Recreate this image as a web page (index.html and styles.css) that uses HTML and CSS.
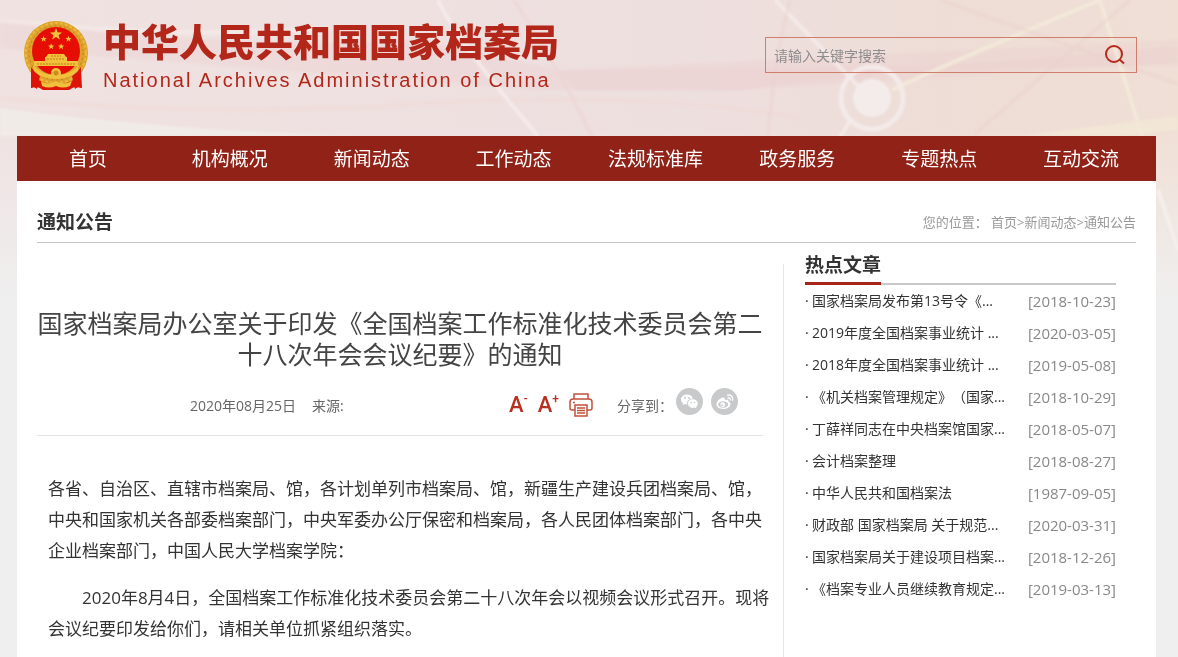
FILE: index.html
```
<!DOCTYPE html>
<html lang="zh-CN">
<head>
    <meta charset="UTF-8">
    <meta name="viewport" content="width=device-width, initial-scale=1.0">
    <title>通知公告 - 中华人民共和国国家档案局</title>
    <link rel="stylesheet" href="styles.css">
</head>
<body>
    <svg class="page-bg" viewBox="0 0 1178 320" preserveAspectRatio="none" aria-hidden="true">
        <g class="glow">
            <path d="M0 18 Q200 50 420 40 L560 70 L1178 40 V66 Q900 66 740 90 H540 Q300 72 0 48Z" fill="#ecd0cf" opacity=".4"/>
            <path d="M560 71 L900 66 Q1000 64 1178 46 V62 Q940 78 740 90 L575 90Z" fill="#ecd0cf" opacity=".4"/>
            <path d="M0 108 Q160 130 360 136 H0Z" fill="#f1ece8" opacity=".9"/>
            <path d="M0 98 Q200 118 420 104 T800 118" fill="none" stroke="#efd6d2" stroke-width="4" opacity=".4"/>
            <path d="M0 20 Q180 40 330 28" fill="none" stroke="#f5ecea" stroke-width="5" opacity=".6"/>
            <path d="M438 0 Q456 40 538 136" fill="none" stroke="#f6eeec" stroke-width="4" opacity=".8"/>
            <path d="M514 0 Q560 70 592 136" fill="none" stroke="#ecd2d0" stroke-width="3" opacity=".6"/>
            <path d="M775 0 L858 86 M852 118 L838 140" stroke="#f5edea" stroke-width="4" opacity=".8"/>
            <path d="M892 90 Q960 58 1100 0 M1100 0 L1142 136" fill="none" stroke="#f3ead9" stroke-width="4" opacity=".9"/>
            <path d="M940 0 L1178 84 M975 134 L1130 0 M790 0 Q774 60 768 136" fill="none" stroke="#ecd2cc" stroke-width="3" opacity=".5"/>
            <path d="M1158 190 L1178 250" stroke="#f4efed" stroke-width="4"/>
            <path d="M1020 136 L1178 116 V130 L1120 136Z" fill="#f2e8d6" opacity=".8"/>
            <circle cx="872" cy="98" r="31" fill="none" stroke="#f4eceb" stroke-width="5" opacity=".9"/>
            <circle cx="872" cy="98" r="19" fill="#f3ecea"/>
        </g>
    </svg>

    <div class="container">
        <header class="header">
            <div class="brand">
                <svg class="emblem" viewBox="0 0 66 72" aria-hidden="true">
                    <path d="M9 50 L8 69 Q14 66 20 71 L46 71 Q52 66 59 69 L58 50Z" fill="#dd1408"/>
                    <circle cx="33" cy="34" r="32" fill="#dda12c"/>
                    <circle cx="33" cy="34" r="30" fill="none" stroke="#e9bb3c" stroke-width="2" stroke-dasharray="3 2"/>
                    <circle cx="33" cy="34" r="27" fill="none" stroke="#c47e1e" stroke-width="1" stroke-dasharray="2 3"/>
                    <circle cx="33" cy="32" r="24" fill="#e60d05"/>
                    <path d="M8 48 Q12 54 17 57 L14 70 Q11 67 8 69Z M58 48 Q54 54 49 57 L52 70 Q55 67 58 69Z" fill="#dd1408"/>
                    <g fill="#f0c23c">
                        <path id="star" d="M33 9 L34.600 13.300 L39 13.400 L35.600 16.200 L36.800 20.500 L33 18 L29.200 20.500 L30.400 16.200 L27 13.400 L31.400 13.300Z"/>
                        <use href="#star" transform="translate(3.500 12) scale(.52)"/>
                        <use href="#star" transform="translate(28.300 12) scale(.52)"/>
                        <use href="#star" transform="translate(11 19.500) scale(.52)"/>
                        <use href="#star" transform="translate(21 19.500) scale(.52)"/>
                        <path d="M25 35 H41 L43 38 H23Z M22 38 H44 V42 H22Z M11 42 H55 V47 H11Z"/>
                        <path d="M10 46 Q18 56 33 56 Q48 56 56 46 L55 52 Q47 60 33 60 Q19 60 11 52Z"/>
                        <circle cx="33" cy="54" r="5"/>
                        <path d="M18 62 Q26 67 33 62 Q40 67 49 62 L47 67 Q40 70 33 67 Q26 70 19 67Z"/>
                    </g>
                    <path d="M28 37 H38 M24 40 H42 M14 45 H52" stroke="#c57a18" stroke-width="1" stroke-dasharray="2 1"/>
                    <circle cx="33" cy="54" r="2.500" fill="#c98a20"/>
                </svg>
                <div class="brand-text">
                    <div class="brand-cn">中华人民共和国国家档案局</div>
                    <div class="brand-en">National Archives Administration of China</div>
                </div>
            </div>
            <form class="search">
                <input type="text" placeholder="请输入关键字搜索" aria-label="请输入关键字搜索">
                <button type="button" aria-label="搜索">
                    <svg width="20" height="20" viewBox="0 0 20 20" fill="none" stroke="#b52a1c" stroke-width="2">
                        <circle cx="9" cy="9" r="8"/>
                        <path d="M14.500 14.500 L19 18.500"/>
                    </svg>
                </button>
            </form>
        </header>

        <nav class="nav">
            <a href="#">首页</a>
            <a href="#">机构概况</a>
            <a href="#">新闻动态</a>
            <a href="#">工作动态</a>
            <a href="#">法规标准库</a>
            <a href="#">政务服务</a>
            <a href="#">专题热点</a>
            <a href="#">互动交流</a>
        </nav>

        <main class="content">
            <div class="title-bar">
                <h2>通知公告</h2>
                <div class="crumbs">
                    <span>您的位置：</span>
                    <a href="#">首页</a>&gt;<a href="#">新闻动态</a>&gt;<a href="#">通知公告</a>
                </div>
            </div>

            <div class="columns">
                <article class="article">
                    <h1>国家档案局办公室关于印发《全国档案工作标准化技术委员会第二十八次年会会议纪要》的通知</h1>
                    <div class="meta">
                        <div class="source">
                            <span>2020年08月25日</span>
                            <span>来源:</span>
                        </div>
                        <div class="tools">
                            <button type="button" class="size-btn" aria-label="缩小字号">A<sup>-</sup></button>
                            <button type="button" class="size-btn" aria-label="放大字号">A<sup>+</sup></button>
                            <button type="button" aria-label="打印">
                                <svg width="24" height="24" viewBox="0 0 24 24" fill="none" stroke="#c2503c" stroke-width="1.500">
                                    <path d="M5 6 V1 H19 V6"/>
                                    <path d="M6 17 H3 Q1 17 1 15 V9 Q1 6 4 6 H20 Q23 6 23 9 V15 Q23 17 21 17 H18"/>
                                    <path d="M6 12 H18 V23 H6Z M8 15 H16 M8 17.500 H16 M8 20 H16 M4 9.500 H6"/>
                                </svg>
                            </button>
                        </div>
                        <div class="share">
                            <span>分享到：</span>
                            <a href="#" aria-label="微信">
                                <svg width="27" height="27" viewBox="0 0 27 27">
                                    <circle cx="13.500" cy="13.500" r="13.500" fill="#c8c9ca"/>
                                    <path d="M11 6.500 C7.500 6.500 5 8.700 5 11.500 C5 13 5.800 14.300 7 15.200 L6.500 17.200 L8.800 16 Q10 16.400 11.200 16.400 C10.500 13 13 10.500 16.900 10.500 C16.200 8 13.800 6.500 11 6.500Z" fill="#fff"/>
                                    <path d="M16.800 11.300 C14 11.300 11.900 13.200 11.900 15.600 C11.900 18 14 19.900 16.800 19.900 Q17.800 19.900 18.700 19.500 L20.500 20.500 L20.100 18.900 C21.200 18.100 21.800 16.900 21.800 15.600 C21.800 13.200 19.600 11.300 16.800 11.300Z" fill="#fff"/>
                                    <g fill="#c8c9ca">
                                        <circle cx="9" cy="10" r="1"/><circle cx="13" cy="10" r="1"/>
                                        <circle cx="15.200" cy="14.500" r=".8"/><circle cx="18.500" cy="14.500" r=".8"/>
                                    </g>
                                </svg>
                            </a>
                            <a href="#" aria-label="微博">
                                <svg width="27" height="27" viewBox="0 0 27 27" fill="none">
                                    <circle cx="13.500" cy="13.500" r="13.500" fill="#c8c9ca"/>
                                    <path d="M11.500 9.500 C9 10 5.500 13.500 5.500 16.300 C5.500 19.200 8.700 21 12.300 21 C16.500 21 19.500 18.500 19.500 16.200 C19.500 14.800 18.500 14 17.300 13.600 C17.900 11.800 16.500 11.200 13.700 12.200 C14.300 10.200 13.500 9.200 11.500 9.500Z" fill="#fff"/>
                                    <ellipse cx="12.200" cy="16.500" rx="5" ry="3.300" fill="#c8c9ca"/>
                                    <circle cx="11.700" cy="16.700" r="2.400" fill="#fff"/>
                                    <circle cx="11" cy="17.200" r=".9" fill="#c8c9ca"/>
                                    <path d="M16.500 7.200 C20 6.300 22.500 9 21.500 12.300 M17 9.800 C18.700 9.500 19.500 10.600 19.100 12" stroke="#fff" stroke-width="1.300" stroke-linecap="round"/>
                                </svg>
                            </a>
                        </div>
                    </div>
                    <div class="body-text">
                        <p>各省、自治区、直辖市档案局、馆，各计划单列市档案局、馆，新疆生产建设兵团档案局、馆，中央和国家机关各部委档案部门，中央军委办公厅保密和档案局，各人民团体档案部门，各中央企业档案部门，中国人民大学档案学院：</p>
                        <p class="indent">2020年8月4日，全国档案工作标准化技术委员会第二十八次年会以视频会议形式召开。现将会议纪要印发给你们，请相关单位抓紧组织落实。</p>
                    </div>
                </article>

                <aside class="hot">
                    <div class="hot-head"><h2>热点文章</h2></div>
                    <ul>
                        <li><a href="#">国家档案局发布第13号令《...</a><span>[2018-10-23]</span></li>
                        <li><a href="#">2019年度全国档案事业统计 ...</a><span>[2020-03-05]</span></li>
                        <li><a href="#">2018年度全国档案事业统计 ...</a><span>[2019-05-08]</span></li>
                        <li><a href="#">《机关档案管理规定》（国家...</a><span>[2018-10-29]</span></li>
                        <li><a href="#">丁薛祥同志在中央档案馆国家...</a><span>[2018-05-07]</span></li>
                        <li><a href="#">会计档案整理</a><span>[2018-08-27]</span></li>
                        <li><a href="#">中华人民共和国档案法</a><span>[1987-09-05]</span></li>
                        <li><a href="#">财政部 国家档案局 关于规范...</a><span>[2020-03-31]</span></li>
                        <li><a href="#">国家档案局关于建设项目档案...</a><span>[2018-12-26]</span></li>
                        <li><a href="#">《档案专业人员继续教育规定...</a><span>[2019-03-13]</span></li>
                    </ul>
                </aside>
            </div>
        </main>
    </div>
</body>
</html>
```
FILE: styles.css
```
* {
    box-sizing: border-box;
}
html {
    height: 100%;
    overflow: hidden;
}
body {
    position: relative;
    margin: 0;
    min-height: 100%;
    font-family: "Open Sans", "Noto Sans CJK SC", sans-serif;
    font-size: 14px;
    color: #333;
    background: #efefef;
    text-spacing-trim: space-all;
}
h1, h2, p, ul {
    margin: 0;
    padding: 0;
}
a {
    color: inherit;
    text-decoration: none;
}
button {
    padding: 0;
    border: none;
    background: none;
    cursor: pointer;
}
svg {
    display: block;
}

/* header backdrop */
.page-bg {
    position: absolute;
    top: 0;
    left: 0;
    width: 100%;
    height: 320px;
    background: linear-gradient(rgba(239, 239, 239, 0) 40%, #efefef 95%), linear-gradient(90deg, #efe2e1, #eedfdf 60%, #eeddd6 80%, #f0dfd5);
}
.glow {
    filter: blur(1px);
}
.container {
    position: relative;
    margin: 0 22px 0 17px;
}
.header {
    display: flex;
    justify-content: space-between;
    align-items: flex-start;
    height: 136px;
    padding: 19px 19px 0 6px;
}
.brand {
    display: flex;
    align-items: flex-start;
    gap: 14px;
}
.emblem {
    width: 66px;
    height: 72px;
}
.brand-text {
    color: #b3271a;
    white-space: nowrap;
}
.brand-cn {
    font-family: "Noto Sans CJK SC", sans-serif;
    font-size: 38px;
    font-weight: 900;
    line-height: 42px;
}
.brand-en {
    margin-top: 7px;
    font-family: "Liberation Sans", sans-serif;
    font-size: 20px;
    line-height: 24px;
    letter-spacing: 2px;
}
.search {
    display: flex;
    align-items: center;
    width: 372px;
    height: 36px;
    margin-top: 18px;
    padding: 0 11px 0 8px;
    border: 1px solid #cf7e6c;
}
.search input {
    flex: 1;
    min-width: 0;
    padding: 0;
    border: none;
    outline: none;
    background: none;
    font-family: inherit;
    font-size: 14px;
}
.search input::placeholder {
    color: #8f8c8e;
}

.nav {
    display: flex;
    padding: 1px 4px 0 0;
    background: #902218;
}
.nav a {
    flex: 1;
    color: #fff;
    font-size: 19px;
    line-height: 44px;
    text-align: center;
}

.content {
    min-height: 476px;
    padding: 22px 20px 0;
    background: #fff;
}
.title-bar {
    display: flex;
    justify-content: space-between;
    border-bottom: 1px solid #c4c4c4;
    line-height: 39px;
}
.title-bar h2 {
    font-size: 19px;
}
.crumbs {
    color: #999;
    font-size: 13px;
}
.columns {
    display: flex;
    justify-content: space-between;
}

.article {
    flex: 1;
    padding: 65px 8px 20px 0;
}
.article h1 {
    margin-right: 12px;
    font-size: 25px;
    font-weight: 400;
    line-height: 31px;
    text-align: center;
    color: #444;
}
.meta {
    display: flex;
    align-items: center;
    height: 66px;
    margin-right: 12px;
    padding: 4px 25px 0 153px;
    border-bottom: 1px solid #e4e4e4;
    color: #666;
}
.source {
    display: flex;
    gap: 16px;
}
.tools {
    display: flex;
    align-items: center;
    gap: 10px;
    margin-left: auto;
}
.size-btn {
    display: flex;
    font-family: Roboto, sans-serif;
    font-size: 22px;
    font-weight: 500;
    line-height: 24px;
    color: #b8301f;
}
.size-btn sup {
    font-size: 12px;
    line-height: 12px;
}
.share {
    display: flex;
    align-items: center;
    gap: 3px;
    margin-left: 24px;
}
.share a {
    margin-bottom: 6px;
}
.share a + a {
    margin-left: 5px;
}
.body-text {
    padding: 37px 0 0 11px;
    font-size: 17px;
    line-height: 31px;
}
.body-text p {
    margin-bottom: 16px;
}
.body-text .indent {
    text-indent: 2em;
}

.hot {
    width: 353px;
    margin-top: 21px;
    padding: 0 20px 0 21px;
    border-left: 1px solid #e6e6e6;
}
.hot-head {
    display: flex;
    margin-top: -16px;
    border-bottom: 2px solid #c8c8c8;
}
.hot-head h2 {
    margin-bottom: -2px;
    border-bottom: 3px solid #a82318;
    font-size: 19px;
    line-height: 34px;
}
.hot ul {
    list-style: none;
}
.hot li {
    display: flex;
    line-height: 32px;
}
.hot li::before {
    content: "·";
    width: 7px;
}
.hot li a {
    flex: 1;
    white-space: nowrap;
}
.hot li span {
    color: #888;
    font-size: 15px;
}
```
